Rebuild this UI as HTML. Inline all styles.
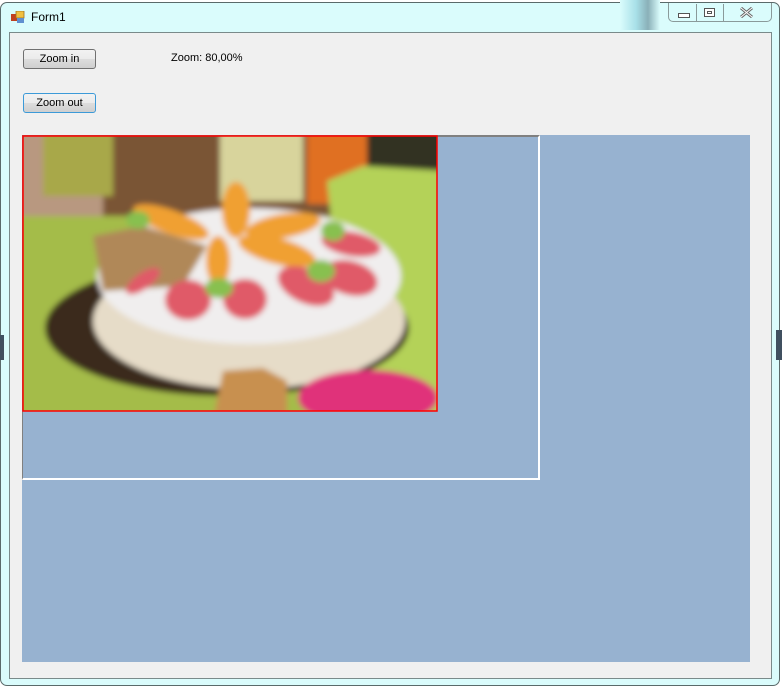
<!DOCTYPE html>
<html><head><meta charset="utf-8"><style>
html,body{margin:0;padding:0;width:782px;height:688px;overflow:hidden;background:#fff;font-family:"Liberation Sans",sans-serif;}
.win{position:absolute;left:0;top:2px;width:780px;height:684px;background:#dafcfc;border:1px solid #5a6a6a;border-radius:7px;box-sizing:border-box;}
.title{position:absolute;left:31px;top:10px;font-size:12px;color:#000;}
.client{position:absolute;left:9px;top:32px;width:763px;height:647px;background:#f0f0f0;border:1px solid #7a8a8a;box-sizing:border-box;}
.btn{position:absolute;height:20px;border:1px solid #707070;border-radius:3px;background:linear-gradient(#f2f2f2 0%,#ebebeb 50%,#dddddd 51%,#cfcfcf 100%);font-size:11px;text-align:center;line-height:18px;box-sizing:border-box;}
.caps{position:absolute;left:668px;top:3px;width:104px;height:19px;border:1px solid #8a9a9a;border-top:none;border-radius:0 0 5px 5px;box-sizing:border-box;}
</style></head><body>
<div class="win"></div>
<div style="position:absolute;left:0;top:335px;width:4px;height:25px;background:#405060"></div>
<div style="position:absolute;left:776px;top:330px;width:6px;height:30px;background:#405060"></div>
<svg style="position:absolute;left:11px;top:11px" width="14" height="13"><rect x="0" y="3" width="6" height="7" fill="#c04020"/><rect x="5" y="0" width="8" height="7" fill="#f0c040" stroke="#a07020" stroke-width=".8"/><rect x="6" y="7" width="7" height="5" fill="#6090d0"/></svg>
<div class="title">Form1</div>
<div style="position:absolute;left:620px;top:0;width:40px;height:30px;background:linear-gradient(90deg,#dafcfc,#a8e0e8 40%,#8ab0b8 70%,#dafcfc)"></div>
<div class="caps"></div>
<div style="position:absolute;left:696px;top:4px;width:1px;height:18px;background:#8a9a9a"></div>
<div style="position:absolute;left:723px;top:4px;width:1px;height:18px;background:#8a9a9a"></div>
<div style="position:absolute;left:678px;top:13px;width:10px;height:3px;border:1px solid #555;background:#fff"></div>
<div style="position:absolute;left:704px;top:8px;width:9px;height:7px;border:1px solid #555;background:#fff"><div style="margin:2px;width:3px;height:1px;border:1px solid #555"></div></div>
<svg style="position:absolute;left:740px;top:7px" width="13" height="11"><path d="M1 1 L12 10 M12 1 L1 10" stroke="#666" stroke-width="3"/><path d="M1 1 L12 10 M12 1 L1 10" stroke="#fff" stroke-width="1"/></svg>
<div class="client"></div>
<div class="btn" style="left:23px;top:49px;width:73px">Zoom in</div>
<div style="position:absolute;left:171px;top:52px;font-size:11px">Zoom: 80,00%</div>
<div class="btn" style="left:23px;top:93px;width:73px;border-color:#3c9ad8">Zoom out</div>
<div style="position:absolute;left:22px;top:135px;width:728px;height:527px;background:#97b2d0"></div>
<div style="position:absolute;left:22px;top:135px;width:518px;height:345px;border-top:2px solid #808080;border-left:1px solid #808080;border-right:2px solid #fff;border-bottom:2px solid #fff;box-sizing:border-box"></div>
<svg style="position:absolute;left:22px;top:135px" width="416" height="277" viewBox="-1 -1 416 277">
<defs><clipPath id="c"><rect x="0" y="0" width="414" height="275"/></clipPath><filter id="b"><feGaussianBlur stdDeviation="3"/></filter></defs>
<g clip-path="url(#c)"><g filter="url(#b)">
<rect x="-10" y="-10" width="434" height="295" fill="#7a5535"/>
<rect x="-10" y="-10" width="90" height="100" fill="#b89880"/>
<rect x="20" y="-10" width="70" height="70" fill="#a8a848"/>
<rect x="-10" y="80" width="434" height="205" fill="#a4bc48"/>
<rect x="197" y="-10" width="83" height="75" fill="#d8d49c"/>
<rect x="284" y="-10" width="60" height="78" fill="#e07024"/>
<rect x="344" y="-10" width="80" height="70" fill="#303020"/>
<polygon points="304,45 340,30 424,35 424,285 330,285" fill="#b4d258"/>
<ellipse cx="204" cy="192" rx="182" ry="68" fill="#3a2a1c"/>
<ellipse cx="226" cy="185" rx="156" ry="68" fill="#e6dcc8"/>
<ellipse cx="226" cy="140" rx="152" ry="68" fill="#f0eeee"/>
<polygon points="70,100 120,90 184,110 160,150 80,155" fill="#b08858"/>
<g fill="#f0a030">
<ellipse cx="148" cy="86" rx="40" ry="12" transform="rotate(20 148 86)"/>
<ellipse cx="213" cy="74" rx="14" ry="28"/>
<ellipse cx="260" cy="90" rx="38" ry="12" transform="rotate(-10 260 90)"/>
<ellipse cx="254" cy="115" rx="40" ry="13" transform="rotate(15 254 115)"/>
<ellipse cx="195" cy="125" rx="12" ry="25"/>
</g>
<g fill="#e05a68">
<ellipse cx="165" cy="164" rx="23" ry="20"/>
<ellipse cx="222" cy="163" rx="22" ry="20"/>
<ellipse cx="283" cy="150" rx="30" ry="17" transform="rotate(25 283 150)"/>
<ellipse cx="327" cy="142" rx="28" ry="17" transform="rotate(15 327 142)"/>
<ellipse cx="328" cy="108" rx="30" ry="12" transform="rotate(10 328 108)"/>
<ellipse cx="120" cy="145" rx="20" ry="8" transform="rotate(-35 120 145)"/>
</g>
<g fill="#88c050"><ellipse cx="115" cy="84" rx="12" ry="9"/><ellipse cx="196" cy="152" rx="14" ry="10"/><ellipse cx="298" cy="135" rx="14" ry="11"/><ellipse cx="310" cy="95" rx="12" ry="10"/></g>
<polygon points="190,285 200,235 240,232 264,245 264,285" fill="#c89050"/>
<ellipse cx="345" cy="262" rx="70" ry="28" fill="#e0307a"/>
</g></g>
<rect x="0" y="0" width="414" height="275" fill="none" stroke="#ff0000" stroke-width="1.5"/>
</svg>
</body></html>
